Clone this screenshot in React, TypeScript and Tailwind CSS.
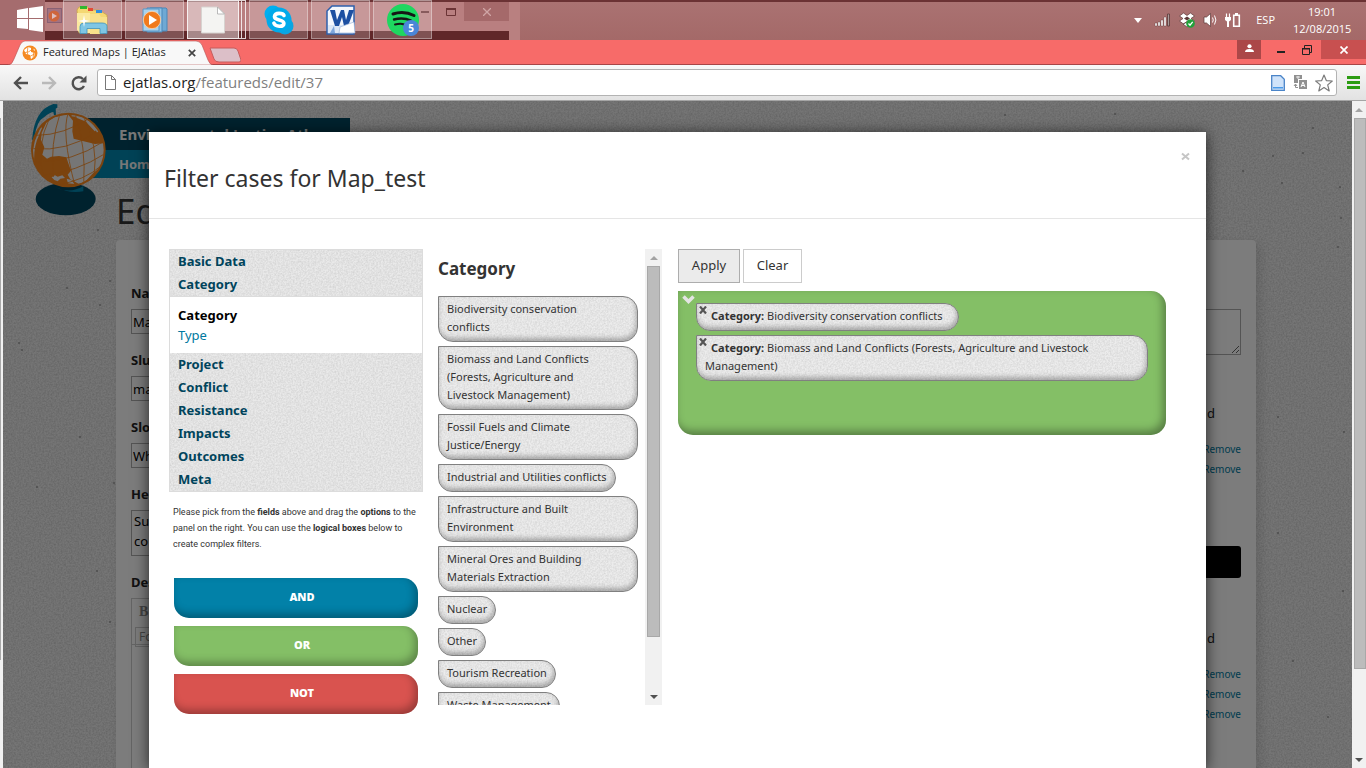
import React from "react";

const sections = ["Project", "Conflict", "Resistance", "Impacts", "Outcomes", "Meta"];

const options = [
  "Biodiversity conservation conflicts",
  "Biomass and Land Conflicts (Forests, Agriculture and Livestock Management)",
  "Fossil Fuels and Climate Justice/Energy",
  "Industrial and Utilities conflicts",
  "Infrastructure and Built Environment",
  "Mineral Ores and Building Materials Extraction",
  "Nuclear",
  "Other",
  "Tourism Recreation",
  "Waste Management",
];

const selected = [
  "Biodiversity conservation conflicts",
  "Biomass and Land Conflicts (Forests, Agriculture and Livestock Management)",
];

const specks = [
  [263, 18], [107, 40], [95, 129], [107, 180], [64, 187], [97, 204], [19, 249], [16, 242], [77, 336],
  [115, 331], [34, 386], [111, 382], [94, 470], [107, 521], [1240, 70], [1270, 55], [1338, 117],
  [1335, 146], [1279, 82], [1300, 52], [1337, 86], [1275, 432], [1340, 490], [1290, 560], [1325, 616],
  [1002, 14], [1112, 13], [1310, 27], [1275, 316], [1341, 331],
];

/* Recycled-paper grain drawn below the content of its parent */
function Paper({ strength = "opacity-10" }: { strength?: string }) {
  const id = React.useId();
  return (
    <svg aria-hidden="true" className={`pointer-events-none absolute inset-0 h-full w-full ${strength}`}>
      <filter id={id}>
        <feTurbulence type="fractalNoise" baseFrequency="0.6" numOctaves="2" seed="4" />
        <feColorMatrix values="0 0 0 0 0  0 0 0 0 0  0 0 0 0 0  1.6 0 0 0 -0.5" />
      </filter>
      <rect width="100%" height="100%" filter={`url(#${id})`} />
    </svg>
  );
}

function Globe() {
  return (
    <svg aria-hidden="true" viewBox="90 20 231 345" className="absolute -left-[58px] -top-4 h-[115px] w-[77px]">
      <ellipse cx="197" cy="311" rx="90" ry="49" fill="#00445c" />
      <path d="M165 275q45 22 85-3v16q-40 8-85-13z" fill="#0084ac" />
      <path d="M172 27l-12-1q-58 18-64 110l8-12q6-48 30-60 18-14 26-14l2 10 6-2-1-18 5-3z" fill="#0084ac" />
      <circle cx="205" cy="164" r="112" fill="#f7861c" />
      <clipPath id="globe-disc"><circle cx="205" cy="164" r="106" /></clipPath>
      <g clipPath="url(#globe-disc)">
        <path d="M125 112l14-30 24-16 40-10 16 20-2 32 4 22 30 8 34 8 28-2 2 40-12 30-24 20-22 24-20 8-26-14-8-14 10-12-8-22-6-18-22-4-24 2-12 6-14-12 6-22-10-22z" fill="#ececec" />
        <path d="M215 60q50 4 78 50M228 64l30 12 28 30M100 200q-2-50 16-84l8-20" fill="none" stroke="#ececec" strokeWidth="5" />
        <path d="M155 246l10-6 8 4 14-4 8 8-14 2-8 8-10-4zM200 250l14 4 10 12-20-2z" fill="#ececec" />
        <path d="M110 120q80 0 165-55M100 160q100 10 190-50M108 200q110 0 200-60M130 240q100-10 185-65M165 270q90-14 140-60M180 55q-30 90-20 190M205 52q-22 60 20 220M150 65q-44 90-20 180M225 54q34 100 26 215M250 62q46 90 32 180" fill="none" stroke="#f7861c" strokeWidth="2.5" />
      </g>
    </svg>
  );
}

function TaskButton({ label, children, bright = false }: { label: string; children: React.ReactNode; bright?: boolean }) {
  return (
    <button
      aria-label={label}
      className={`flex h-[39px] items-center justify-center border ${
        bright ? "w-[52px] border-white/80 bg-white/45" : "w-[59px] border-white/35 bg-white/20"
      }`}
    >
      {children}
    </button>
  );
}

function PlayDisc({ size }: { size: string }) {
  return (
    <svg viewBox="0 0 28 28" className={size} aria-hidden="true">
      <path d="M9 2h16l1 1v22H9z" fill="#6fa9d4" stroke="#4b87b8" />
      <path d="M6 2h15v24H6z" fill="#8fc3e6" stroke="#4b87b8" />
      <path d="M2 3h16v22H2z" fill="#a9d3ef" stroke="#5b96c4" />
      <circle cx="11" cy="14" r="8.7" fill="#f07a1c" stroke="#fbd9b8" strokeWidth=".8" />
      <path d="M8 9l8 5-8 5z" fill="#fff" />
    </svg>
  );
}

function Taskbar() {
  return (
    <header className="relative flex h-10 items-stretch justify-between border-t-2 border-[#6b3234] bg-linear-to-b from-[#aa7272] to-[#a46968]">
      <div className="absolute bottom-0 left-0 top-0 flex w-[520px] flex-col bg-[#b98080]">
        <div className="flex h-[29px] w-[509px] items-start justify-end bg-[#b97f80] text-[#6b3335]">
          <span className="mr-[17px] flex h-[19px] items-center"><svg className="h-[11px] w-2" viewBox="0 0 8 11"><path d="M0 5h8v2H0z" fill="currentColor" /></svg></span>
          <span className="mr-[8px] flex h-[19px] items-center"><svg className="h-2 w-[10px]" viewBox="0 0 10 8"><path d="M.5 1h9v6.500h-9z" fill="none" stroke="currentColor" /><path d="M0 0h10v2H0z" fill="currentColor" /></svg></span>
          <span className="flex h-[19px] w-[45px] items-center justify-center bg-[#a5696a] text-[#cfa5a5]"><svg className="h-2 w-2" viewBox="0 0 8 8"><path d="M0 0l8 8M8 0L0 8" stroke="currentColor" strokeWidth="1.3" /></svg></span>
        </div>
        <div className="h-[9px] w-[509px] bg-[#602729]" />
      </div>

      <div className="relative -mt-0.5 flex items-start">
        <button aria-label="Start" className="flex h-10 w-[45px] items-center justify-end bg-[#a56c6e] pb-0.5 pr-0.5">
          <svg viewBox="0 0 26 26" className="h-[26px] w-[26px]"><path d="M0 4l11-2v10H0zM12 2l14-2v12H12zM0 13h11v10L0 22zM12 13h14v13l-14-2z" fill="#fff" /></svg>
        </button>
        <span className="flex h-[31px] w-[18px] items-center justify-center"><span className="flex h-[15px] w-[15px] items-center justify-center border border-[#7c5a72] bg-[#a07080] opacity-80"><svg viewBox="0 0 12 12" className="h-3 w-3"><circle cx="6" cy="6" r="5.5" fill="#d45f2c" /><path d="M4 3l5 3-5 3z" fill="#e8cfcf" /></svg></span></span>
        <div className="flex gap-[3px]">
          <TaskButton label="File Explorer">
            <svg viewBox="0 0 33 30" className="h-[30px] w-[33px]">
              <path d="M1 5l2-3h9l2 3h9l8 5v16l-3 2H3z" fill="#f4d873" stroke="#caa544" strokeWidth=".8" />
              <path d="M4 1h7v3H4z" fill="#2fb82f" /><path d="M12 3h5v3h-5z" fill="#e34a35" /><path d="M20 5h6v3h-6z" fill="#2f8fe0" />
              <path d="M1 8h13l1 20H4l-3-3z" fill="#fbe9a0" />
              <path d="M14 9h9l2 3h6v14l-5 3H14z" fill="#f8e08a" />
              <path d="M4 28.500v-7q0-3.500 4-3.500h18q5 0 5 3.500v7h-7v-5H11v5z" fill="#7fc6e4" stroke="#3f93bd" strokeWidth=".8" />
              <path d="M8 10l1 5 5 1-5 1-1 5-1-5-5-1 5-1z" fill="#fff" />
            </svg>
          </TaskButton>
          <TaskButton label="Media Player"><PlayDisc size="h-7 w-7" /></TaskButton>
          <div className="flex">
            <TaskButton label="Documents" bright>
              <svg viewBox="0 0 24 28" className="h-7 w-6"><path d="M.5 1h16l7 7v19H.5z" fill="#f4f4f2" stroke="#d7d3d0" /><path d="M16.500 1v7h7z" fill="#fff" stroke="#aaa" strokeWidth=".8" /></svg>
            </TaskButton>
            <span className="h-[39px] w-[3px] border border-l-0 border-white/80" />
            <span className="h-[39px] w-[4px] border border-l-0 border-white/80" />
          </div>
          <TaskButton label="Skype">
            <svg viewBox="0 0 30 30" className="h-[30px] w-[30px]">
              <circle cx="9" cy="9" r="8.500" fill="#00aff0" /><circle cx="21" cy="21" r="8.500" fill="#0aa5e2" /><circle cx="15" cy="15" r="12.500" fill="#00aaea" />
              <path d="M20 10.500C19 8 11 7 10.500 11.500c-.3 4.500 9.800 2.300 9.400 7-.4 4-8.500 3.500-10-.3" fill="none" stroke="#fff" strokeWidth="3.600" strokeLinecap="round" />
            </svg>
          </TaskButton>
          <TaskButton label="Word">
            <svg viewBox="0 0 30 30" className="h-[30px] w-[30px]">
              <path d="M6 1h22v28H1V6z" fill="#f3f7fd" stroke="#2f60ac" strokeWidth="1.5" />
              <path d="M2 20h25v8H2z" fill="#dbe7f7" />
              <path d="M4 5h5l2 10 4-10h3l2 10 3-10h5l-6 16h-4l-2-9-3 9H9z" fill="#1d50a2" />
              <path d="M14 22l14-5 1 11H13z" fill="#fff" stroke="#9db7dc" strokeWidth=".7" />
              <path d="M8 21l-4 7h5z" fill="#7ea6dc" />
            </svg>
          </TaskButton>
          <TaskButton label="Spotify">
            <svg viewBox="0 0 32 32" className="h-8 w-8">
              <circle cx="16" cy="16" r="16" fill="#1ed760" />
              <path d="M6 10q11-3.500 21 1.500" fill="none" stroke="#161616" strokeWidth="3" strokeLinecap="round" />
              <path d="M7 15.500q9-2.500 17 1" fill="none" stroke="#161616" strokeWidth="2.400" strokeLinecap="round" />
              <path d="M8 20.500q6-1.500 9 0" fill="none" stroke="#161616" strokeWidth="2" strokeLinecap="round" />
              <circle cx="24" cy="24" r="8" fill="#4a86d8" />
              <text x="24" y="27.500" textAnchor="middle" fontSize="10" fontWeight="700" fontFamily="Open Sans, sans-serif" fill="#fff">5</text>
            </svg>
          </TaskButton>
        </div>
      </div>

      <div className="relative -mt-0.5 flex items-center pr-[15px] text-white">
        <svg viewBox="0 0 8 5" className="mr-3 h-[5px] w-2"><path d="M0 0h8L4 5z" fill="#fff" /></svg>
        <svg viewBox="0 0 17 14" className="mr-2 h-[14px] w-[17px]"><path d="M1 10h2v3H1zM4 9h2v4H4zM7 7h2v6H7zM10 4h2v9h-2z" fill="#fff" stroke="#5a3838" strokeWidth=".4" /><path d="M13.500 1h2v12h-2z" fill="#a99" stroke="#5a3838" strokeWidth=".8" /></svg>
        <svg viewBox="0 0 16 16" className="mr-2 h-4 w-4"><path d="M4.500 1L8 3.500l3.500-2.500L15.500 4 12 6.500 15.500 9l-4 3L8 9.500 4.500 12 .5 9 4 6.500.5 4zM4 12l4-2 4 2-4 3z" fill="#fff" stroke="#5a3838" strokeWidth=".7" /><path d="M8 4.500l3 2-3 2-3-2z" fill="#5a3838" /><circle cx="11.500" cy="11.500" r="4.300" fill="#21a13a" /><path d="M9.500 11.500l1.500 1.700 2.700-3.300" fill="none" stroke="#fff" strokeWidth="1.300" /></svg>
        <svg viewBox="0 0 14 14" className="mr-2 h-[14px] w-[14px]"><path d="M1 4h2.500L7.500.5v13L3.500 10H1z" fill="#fff" stroke="#5a3838" strokeWidth=".7" /><path d="M9.500 4.500q1.500 2.500 0 5M11.500 2.500q2.800 4.500 0 9" fill="none" stroke="#fff" /></svg>
        <svg viewBox="0 0 16 16" className="h-4 w-4"><path d="M1.500 1.500v4M4.500 1.500v4" stroke="#fff" strokeWidth="1.200" /><path d="M0 5h6v3L4 9.500V15H2V9.500L0 8z" fill="#fff" /><path d="M8.700 3.200h5.600v11.100H8.700z" fill="none" stroke="#fff" strokeWidth="1.600" /><path d="M10 1h3v2h-3z" fill="#fff" /></svg>
        <span className="ml-[15px] font-['Open_Sans',sans-serif] text-[11px]">ESP</span>
        <div className="ml-[18px] w-[58px] text-center font-['Open_Sans',sans-serif] text-[11px] leading-[17px]">
          <div>19:01</div>
          <div>12/08/2015</div>
        </div>
      </div>
    </header>
  );
}

function TabStrip() {
  return (
    <div className="flex h-[25px] items-start justify-between border-b border-[#a84546] bg-[#f76b69]">
      <div className="flex">
        <div className="relative ml-2 flex h-[25px] w-[205px] items-center pl-[14px] pr-[17px]">
          <svg aria-hidden="true" viewBox="0 0 205 25" preserveAspectRatio="none" className="absolute inset-0 h-full w-full"><path d="M0 25q4 0 6-6l6-14q2-4 5-4h171q4 0 6 4l6 15q2 5 5 5z" fill="#f8f8f8" stroke="#b55051" strokeWidth=".6" /></svg>
          <svg viewBox="0 0 16 16" className="relative mr-[5px] h-4 w-4"><circle cx="8" cy="8" r="7.500" fill="#f58a22" /><path d="M2 5l4-3 3 1v4l4 1-1 4-3 2-1-4-4-1zM11 3l2 2-1 1z" fill="#fff" /><path d="M1 8q6 0 11-5M3 12q6 0 11-4M6 1q-2 7 1 13M10 1q3 6 1 13" fill="none" stroke="#f58a22" strokeWidth=".8" /></svg>
          <span className="relative flex-1 whitespace-nowrap font-['Open_Sans',sans-serif] text-[11px] text-[#222]">Featured Maps | EJAtlas</span>
          <button aria-label="Close tab" className="relative"><svg viewBox="0 0 8 8" className="h-2 w-2"><path d="M.8.8l6.400 6.400M7.200.8L.8 7.200" stroke="#444" strokeWidth="1.700" /></svg></button>
        </div>
        <button aria-label="New tab" className="-ml-1 mt-[5px]"><svg viewBox="0 0 32 16" className="h-4 w-8"><path d="M1 1h24q3 0 4 3l3 9q0 2-2 2H10q-4 0-5-3z" fill="#dcbfc8" stroke="#c65c5d" /></svg></button>
      </div>
      <div className="flex h-[19px] items-stretch">
        <button aria-label="Profile" className="flex w-6 items-center justify-center bg-[#ab4748]"><svg viewBox="0 0 10 10" className="mb-0.5 h-[9px] w-[9px]"><circle cx="5" cy="2.500" r="2.300" fill="#fff" /><path d="M0 9q0-3.500 5-3.500T10 9z" fill="#fff" /></svg></button>
        <button aria-label="Minimize" className="flex w-8 items-end justify-center pb-[6px] pl-2"><svg viewBox="0 0 8 2" className="h-0.5 w-2"><path d="M0 0h8v2H0z" fill="#222" /></svg></button>
        <button aria-label="Restore" className="flex w-7 items-center justify-center"><svg viewBox="0 0 10 10" className="h-[10px] w-[10px]"><path d="M.5 3.500h7v6h-7zM2.500 3V.5h7v7H8" fill="none" stroke="#222" /><path d="M0 3h8v1.500H0z" fill="#222" /></svg></button>
        <button aria-label="Close window" className="flex w-[45px] items-center justify-center bg-[#c85050]"><svg viewBox="0 0 8 8" className="h-2 w-2"><path d="M.5.5l7 7M7.500.5l-7 7" stroke="#fff" strokeWidth="1.700" /></svg></button>
      </div>
    </div>
  );
}

function Toolbar() {
  return (
    <div className="flex h-[36px] items-center border-b border-[#a5a5a5] bg-linear-to-b from-[#f8f8f8] to-[#e2e2e2] pl-[13px] pr-[6px]">
      <button aria-label="Back"><svg viewBox="0 0 15 14" className="h-[14px] w-[15px]"><path d="M15 7H2M8 1L2 7l6 6" fill="none" stroke="#505050" strokeWidth="2.400" /></svg></button>
      <button aria-label="Forward" className="ml-[14px]"><svg viewBox="0 0 15 14" className="h-[14px] w-[15px]"><path d="M0 7h13M7 1l6 6-6 6" fill="none" stroke="#b9b9b9" strokeWidth="2.400" /></svg></button>
      <button aria-label="Reload" className="ml-[14px]"><svg viewBox="0 0 16 16" className="h-4 w-4"><path d="M13 11A6 6 0 1 1 12 4" fill="none" stroke="#505050" strokeWidth="2.400" /><path d="M15.500.5v7h-7z" fill="#505050" /></svg></button>
      <div className="ml-[10px] flex h-[27px] flex-1 items-center rounded-[3px] border border-[#b3b3b3] bg-white pl-[7px] pr-[3px]">
        <svg viewBox="0 0 11 15" className="mr-[7px] h-[15px] w-[11px]"><path d="M.5.5h6l4 4v10H.5zM6.500.5v4h4" fill="#fff" stroke="#777" /></svg>
        <label htmlFor="address" className="font-['Open_Sans',sans-serif] text-[15px] text-[#222]">ejatlas.org</label>
        <input id="address" defaultValue="/featureds/edit/37" className="min-w-0 flex-1 font-['Open_Sans',sans-serif] text-[15px] text-[#808080] outline-none" />
        <svg viewBox="0 0 14 16" className="h-4 w-[14px]"><path d="M.7.700h9l3.600 3.600v11H.7z" fill="#cfe3fa" stroke="#4a84c8" strokeWidth="1.300" /><path d="M2 12h10v1.500H2z" fill="#4a9ae8" /></svg>
        <svg viewBox="0 0 15 15" className="ml-2 h-[15px] w-[15px]"><path d="M1 0h8v4H5v4H1z" fill="#909090" /><path d="M6 5h8v9H6z" fill="#909090" /><path d="M2.500 9v3.500H5M1 11l1.500-2L4 11" fill="none" stroke="#909090" /><path d="M8 12l2-5 2 5M8.700 10.500h2.600" fill="none" stroke="#fff" /><path d="M3 2h4M5 1v3" stroke="#fff" strokeWidth=".8" /></svg>
        <button aria-label="Bookmark" className="ml-[7px]"><svg viewBox="0 0 18 18" className="h-[18px] w-[18px]"><path d="M9 1l2.300 5.600 6 .4-4.600 3.900 1.500 6L9 13.600 3.800 16.900l1.500-6L.7 7l6-.4z" fill="#fff" stroke="#7b7b7b" strokeWidth="1.200" strokeLinejoin="round" /></svg></button>
      </div>
      <button aria-label="Menu" className="ml-[10px]"><svg viewBox="0 0 13 13" className="h-[13px] w-[13px]"><path d="M0 0h13v3H0zM0 5h13v3H0zM0 10h13v3H0z" fill="#2c9c12" /></svg></button>
    </div>
  );
}

function Field({ id, label, value }: { id: string; label: string; value: string }) {
  return (
    <div className="mb-4">
      <label htmlFor={id} className="mb-[6px] block text-[13px] font-bold leading-5">{label}</label>
      <input id={id} defaultValue={value} className="block h-[25px] w-[400px] border border-[#a8a8a8] bg-[#f8f8f8] px-px text-[13px] text-black" />
    </div>
  );
}

function RemoveLinks({ count }: { count: number }) {
  return (
    <ul className="mt-4 text-right text-[10px] leading-5 text-[#0079a0]">
      {Array.from({ length: count }, (_, i) => (
        <li key={i}><a href="#remove">Remove</a></li>
      ))}
    </ul>
  );
}

function EditPage() {
  return (
    <div className="relative pl-[113px]">
      <div className="pt-[17px]">
        <div className="relative -ml-[28px] w-[262px] font-bold text-[#f0f0f0]">
          <div className="h-8 truncate bg-[#00445c] pl-[31px] text-[15px] leading-8">Environmental Justice Atlas</div>
          <div className="h-7 bg-[#0084ac] pl-[31px] text-[13px] leading-7">Home</div>
          <Globe />
        </div>
      </div>
      <h1 className="h-[62px] pt-[5px] text-[35px] leading-[56px] text-[#333]">Edit</h1>
      <div className="flex h-[540px] max-w-[1140px] justify-between rounded-[4px] bg-[#f8f8f8] px-[15px] text-[#222] shadow-[4px_4px_12px_rgba(0,0,0,0.12)]">
        <div className="pt-[43px]">
          <Field id="name" label="Name" value="Map_test" />
          <Field id="slug" label="Slug" value="map_test" />
          <Field id="slogan" label="Slogan" value="Wh" />
          <label htmlFor="head" className="mb-[6px] block text-[13px] font-bold leading-5">Header</label>
          <textarea id="head" defaultValue={"Su\nco"} className="mb-4 block h-[46px] w-9 resize-none overflow-hidden border border-[#a8a8a8] bg-[#f8f8f8] px-0.5 text-[13px] leading-5 text-black" />
          <label htmlFor="font" className="mb-[6px] block text-[13px] font-bold leading-5">Description</label>
          <div className="h-[300px] w-[400px] border border-[#c8c8c8] text-[#888]">
            <div className="h-[46px] border-b border-[#c8c8c8] px-[3px]">
              <button className="block h-6 px-1 font-['Liberation_Serif',serif] text-[14px] font-bold">B</button>
              <select id="font" className="h-5 w-24 appearance-none border border-[#c8c8c8] px-[3px] text-[12px] leading-4"><option>Format</option></select>
            </div>
          </div>
        </div>
        <div className="w-[300px] pt-[69px]">
          <textarea aria-label="Notes" className="block h-[46px] w-full border border-[#a8a8a8]" />
          <p className="mt-12 pr-[26px] text-right text-[13px] leading-5">d</p>
          <RemoveLinks count={2} />
          <div className="mt-[67px] h-8 rounded-[3px] bg-black" />
          <p className="mt-[50px] pr-[26px] text-right text-[13px] leading-5">d</p>
          <RemoveLinks count={3} />
        </div>
      </div>
    </div>
  );
}

function ScrollTrack({ thumb, className }: { thumb: string; className: string }) {
  return (
    <div aria-hidden="true" className={`flex shrink-0 flex-col bg-[#f1f1f1] ${className}`}>
      <span className="flex h-[17px] shrink-0 items-center justify-center"><svg viewBox="0 0 8 4" className="h-1 w-2"><path d="M0 4h8L4 0z" fill="#a3a3a3" /></svg></span>
      <span className="flex min-h-0 flex-1 flex-col"><span className={`border border-[#a8a8a8] bg-[#bcbcbc] ${thumb}`} /></span>
      <span className="flex h-[17px] shrink-0 items-center justify-center"><svg viewBox="0 0 8 4" className="h-1 w-2"><path d="M0 0h8L4 4z" fill="#505050" /></svg></span>
    </div>
  );
}

const chip =
  "relative overflow-hidden rounded-[15px] rounded-tl-none border border-[#808080] bg-[#ececec] pb-[5px] pl-2 pt-[3px] text-[11px] leading-[18px] text-[#333] shadow-[inset_-1px_-3px_5px_rgba(0,0,0,0.28)]";

function LogicBox({ label, tone }: { label: string; tone: string }) {
  return (
    <button className={`h-10 w-full rounded-[15px] rounded-tl-none pb-0.5 pl-3 text-center text-[11px] font-black text-white shadow-[inset_-3px_-4px_8px_rgba(0,0,0,0.3)] ${tone}`}>{label}</button>
  );
}

function FilterDialog() {
  return (
    <section role="dialog" aria-labelledby="dialog-title" className="flex w-full max-w-[1057px] flex-col bg-white text-[#333] shadow-[0_2px_14px_rgba(0,0,0,0.7)]">
      <header className="flex h-[87px] items-start justify-between border-b border-[#e5e5e5] pl-[15px] pr-4">
        <h2 id="dialog-title" className="pt-[30px] text-[23px] leading-8">Filter cases for Map_test</h2>
        <button aria-label="Close" className="mt-[20px]"><svg viewBox="0 0 9 9" className="h-[9px] w-[9px]"><path d="M1 1.500l7 6M8 1.500l-7 6" stroke="#c6c6c6" strokeWidth="2" /></svg></button>
      </header>

      <div className="flex items-start pl-5 pr-10 pt-[30px]">
        <div className="w-[254px] shrink-0">
          <nav className="relative border border-[#dcdcdc] bg-[#e9e9e9] text-[13px] font-bold leading-[23px] text-[#00445c]">
            <Paper />
            <div className="relative">
              <a href="#basic" className="block px-2">Basic Data</a>
              <a href="#category" className="block px-2">Category</a>
              <div className="border-t border-[#dcdcdc] bg-white px-2 pb-[6px] pt-2 leading-5">
                <a href="#category-field" className="block text-black">Category</a>
                <a href="#type" className="block pb-0.5 font-normal text-[#0079a0]">Type</a>
              </div>
              {sections.map((name) => (
                <a key={name} href={`#${name.toLowerCase()}`} className="block px-2">{name}</a>
              ))}
            </div>
          </nav>
          <p className="mt-3 px-1 font-[Roboto,sans-serif] text-[9px] leading-4">
            Please pick from the <b>fields</b> above and drag the <b>options</b> to the panel on the right. You can use the <b>logical boxes</b> below to create complex filters.
          </p>
          <div className="mt-[26px] flex flex-col gap-2 px-[5px]">
            <LogicBox label="AND" tone="bg-[#0281a8]" />
            <LogicBox label="OR" tone="bg-[#84bf66]" />
            <LogicBox label="NOT" tone="bg-[#d9534f]" />
          </div>
        </div>

        <div className="ml-[15px] flex h-[456px] w-[224px] shrink-0 overflow-hidden">
          <div className="min-w-0 flex-1">
            <h3 className="mb-[15px] pt-[8px] text-[17px] font-bold leading-6">Category</h3>
            <ul className="flex w-[200px] flex-col items-start gap-1">
              {options.map((name) => (
                <li key={name} className={`cursor-grab ${chip} ${name.length > 34 ? "w-full pr-6" : "pr-2"}`}>
                  <Paper />
                  <span className="relative">{name}</span>
                </li>
              ))}
            </ul>
          </div>
          <ScrollTrack className="w-[17px]" thumb="mx-0.5 h-[88%]" />
        </div>

        <div className="ml-4 min-w-0 flex-1">
          <div className="flex gap-[3px] text-[13px]">
            <button className="h-[34px] w-[62px] border border-[#adadad] bg-[#ebebeb]">Apply</button>
            <button className="h-[34px] w-[59px] border border-[#ccc] bg-white">Clear</button>
          </div>
          <div className="relative mt-2 min-h-[144px] rounded-[15px] rounded-tl-none bg-[#84bf66] pb-4 pl-[18px] pr-[18px] pt-3 shadow-[inset_-3px_-4px_8px_rgba(0,0,0,0.35)]">
            <svg aria-hidden="true" viewBox="0 0 13 9" className="absolute left-1 top-1 h-[9px] w-[13px]"><path d="M1.500 1.500l5 5 5-5" fill="none" stroke="#e4e4e4" strokeWidth="3.500" /></svg>
            <ul className="flex flex-col items-start gap-1">
              {selected.map((name) => (
                <li key={name} className={`${chip} pr-4`}>
                  <Paper />
                  <button aria-label={`Remove ${name}`} className="absolute left-0.5 top-0.5"><svg viewBox="0 0 8 8" className="h-2 w-2"><path d="M1 .5l6 7M7 .5l-6 7" stroke="#555" strokeWidth="2.200" /></svg></button>
                  <span className="relative pl-[6px]"><b>Category:</b> {name}</span>
                </li>
              ))}
            </ul>
          </div>
        </div>
      </div>
    </section>
  );
}

export default function App() {
  return (
    <div className="flex h-screen flex-col overflow-hidden bg-white font-['Noto_Sans',sans-serif]">
      <Taskbar />
      <TabStrip />
      <Toolbar />
      <div className="flex min-h-0 flex-1">
        <div className="w-[3px] shrink-0 bg-[#f1f1f1] pt-[17px]"><div className="h-5/6 w-px bg-[#a8a8a8]" /></div>
        <main className="relative min-w-0 flex-1 overflow-hidden bg-[#ebebeb]">
          <Paper strength="opacity-15" />
          <svg aria-hidden="true" className="absolute inset-0 h-full w-full">
            {specks.map(([x, y]) => <ellipse key={`${x}-${y}`} cx={x} cy={y} rx="1.200" ry=".8" fill="#888" />)}
          </svg>
          <EditPage />
          <div className="absolute inset-0 flex items-stretch justify-center bg-black/50 pt-[31px]">
            <FilterDialog />
          </div>
        </main>
        <ScrollTrack className="w-[14px]" thumb="ml-0.5 h-[87%]" />
      </div>
    </div>
  );
}
